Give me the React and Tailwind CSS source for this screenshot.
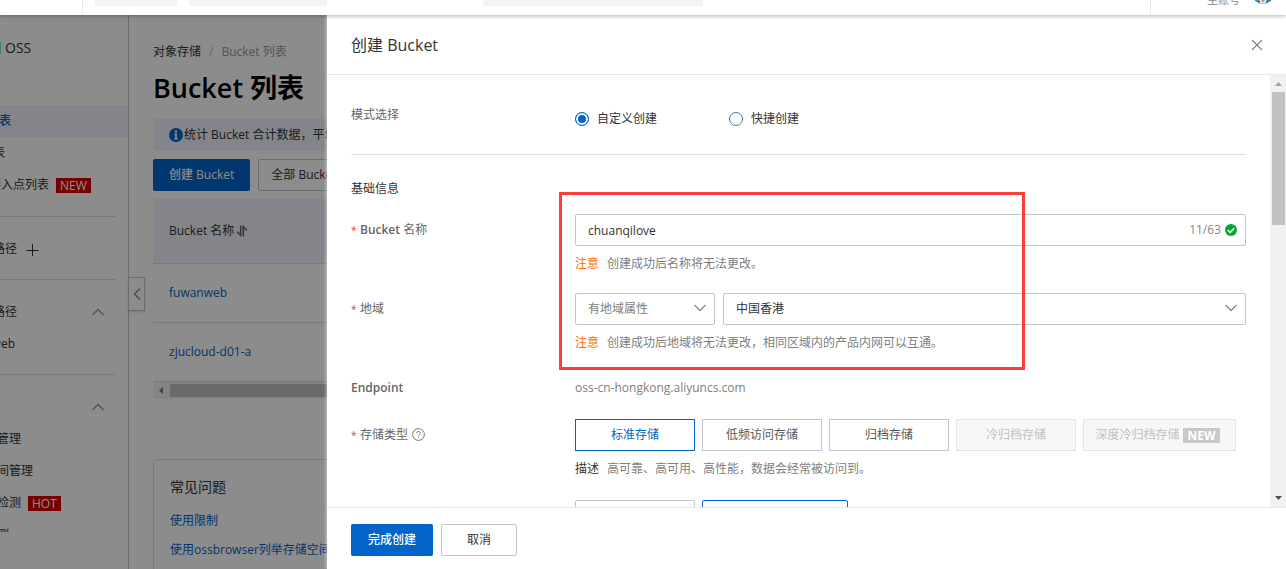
import React from "react";

const STORAGE_TYPES = [
  { label: "标准存储", state: "active" },
  { label: "低频访问存储", state: "normal" },
  { label: "归档存储", state: "normal" },
  { label: "冷归档存储", state: "disabled" },
  { label: "深度冷归档存储", state: "disabled", badge: "NEW" },
];

const OPTION_STYLES = {
  active: "border-[#0064c8] text-[#0064c8]",
  normal: "border-[#c0c6cc] text-[#555]",
  disabled: "border-[#e3e4e6] bg-[#f7f7f7] text-[#c1c1c1]",
};

function Chevron({ className, d = "M1.500 4 7 9.500 12.500 4" }) {
  return (
    <svg viewBox="0 0 14 14" className={className} fill="none" stroke="currentColor" strokeWidth="1.3" aria-hidden="true">
      <path d={d} />
    </svg>
  );
}

const UP = "M1.5 10 7 4.500 12.5 10";

function TopBar() {
  return (
    <header className="relative z-30 flex h-[15px] shrink-0 items-end overflow-hidden bg-white shadow-[0_1px_4px_rgba(0,0,0,0.3)]">
      <div className="flex h-[50px] w-full shrink-0 items-center">
        <div className="h-full w-[83px] border-r border-[#e8e9eb]" />
        <div className="ml-3 h-8 w-[82px] rounded-xs bg-[#f1f4f5]" />
        <div className="ml-3 h-8 w-[138px] rounded-xs bg-[#f1f4f5]" />
        <div className="ml-39 h-8 w-[220px] bg-[#f1f4f5]" />
        <div className="ml-auto flex h-full w-[136px] items-end justify-end gap-3 border-l border-[#e8e9eb] pr-3 text-[11px] text-[#888]">
          <span className="pb-[7px] leading-4">主账号</span>
          <svg viewBox="0 0 22 22" className="mb-[11px] h-[22px] w-[22px]" aria-hidden="true">
            <circle cx="11" cy="11" r="11" fill="#5fa3bd" />
            <path d="M3 18.5Q11 24 19 18.5V15H3Z" fill="#3f83a3" />
            <path d="M7 16h8l-1.500 5.500h-5z" fill="#eef4f5" />
            <path d="M9.500 16h3v4h-3z" fill="#e8876b" />
          </svg>
        </div>
      </div>
    </header>
  );
}

function SideRow({ children, width, badge, active, toggle }) {
  return (
    <li className={`flex h-8 items-center ${active ? "bg-[#eff3fc] font-medium text-[#0064c8]" : ""}`}>
      <span className={`flex shrink-0 justify-end overflow-hidden whitespace-nowrap ${width}`}>{children}</span>
      {badge && <span className="ml-[7px] bg-[#d80000] px-1 leading-[15px] text-white">{badge}</span>}
      {toggle && <Chevron d={UP} className="mr-6 ml-auto h-3.5 w-3.5 text-[#999]" />}
    </li>
  );
}

function Sidebar() {
  return (
    <nav className="relative w-[129px] shrink-0 border-r border-[#c0c6cc] bg-white text-xs">
      <div className="flex h-[517px] flex-col overflow-hidden">
        <div className="flex h-[90px] shrink-0 items-start pt-[22px] text-sm leading-[22px]">
          <span className="mt-[5px] mr-1 h-3 w-px bg-[#7fe0dc]" />
          <span>OSS</span>
        </div>
        <ul className="shrink-0 pb-[15px]">
          <SideRow width="w-[11px]" active>表</SideRow>
          <SideRow width="w-[5px]">表</SideRow>
          <SideRow width="w-[49px]" badge="NEW">接入点列表</SideRow>
        </ul>
        <ul className="mr-3 shrink-0 border-t border-[#dcdde0] pt-4 pb-3.5">
          <li className="flex h-8 items-center gap-2">
            <span className="flex w-[17px] justify-end overflow-hidden whitespace-nowrap">路径</span>
            <svg viewBox="0 0 14 14" className="h-3.5 w-3.5" fill="none" stroke="currentColor" aria-hidden="true">
              <path d="M7.500 2v12M1.500 8.500h12" />
            </svg>
          </li>
        </ul>
        <ul className="-mr-px shrink-0 pb-3.5">
          <li className="mr-[13px] border-t border-[#dcdde0] pb-4" />
          <SideRow width="w-[17px]" toggle>路径</SideRow>
          <SideRow width="w-[15px]">web</SideRow>
        </ul>
        <ul className="-mr-px shrink-0">
          <li className="mr-[13px] border-t border-[#dcdde0] pb-4" />
          <SideRow width="w-0" toggle />
          <SideRow width="w-[21px]">管理</SideRow>
          <SideRow width="w-[33px]">间管理</SideRow>
          <SideRow width="w-[21px]" badge="HOT">检测</SideRow>
          <SideRow width="w-[9px]">测</SideRow>
        </ul>
      </div>
      <button type="button" aria-label="收起" className="absolute top-[262px] left-32 flex h-[34px] w-[17px] items-center justify-center border border-[#c0c6cc] bg-white text-[#888] shadow-sm">
        <Chevron d="M10 1.500 4.500 7l5.500 5.500" className="h-3.5 w-3.5" />
      </button>
    </nav>
  );
}

function BucketPage() {
  return (
    <main className="min-w-0 flex-1 overflow-hidden bg-white pl-6 text-xs">
      <div className="flex gap-2 pt-[27px] leading-5">
        <a href="#oss">对象存储</a>
        <span className="text-[#bbb]">/</span>
        <span className="text-[#999]">Bucket 列表</span>
      </div>
      <h1 className="mt-1.5 text-[27px] leading-10 font-semibold text-black">Bucket 列表</h1>
      <div className="mt-[11px] flex h-8 items-center bg-[#eff3fc] pl-4 whitespace-nowrap">
        <svg viewBox="0 0 14 14" className="mr-px h-3.5 w-3.5 shrink-0" aria-hidden="true">
          <circle cx="7" cy="7" r="7" fill="#0064c8" />
          <path d="M5 5.500h3v4.700h1.200v1.300H4.900v-1.300H6V6.800H5z" fill="#eff3fc" />
          <circle cx="7" cy="3.500" r="1.200" fill="#eff3fc" />
        </svg>
        统计 Bucket 合计数据，平均延迟
      </div>
      <div className="mt-2 flex gap-2 whitespace-nowrap">
        <button type="button" className="h-8 rounded-xs bg-[#0064c8] px-4 font-medium text-white">创建 Bucket</button>
        <button type="button" className="h-8 rounded-xs border border-[#c0c6cc] px-3">全部 Bucket</button>
      </div>
      <table className="mt-2 w-full border-collapse text-left">
        <thead>
          <tr className="h-16 border-b border-[#dcdde0] bg-[#eff3fc]">
            <th className="pl-4 font-normal">
              <span className="flex items-center gap-0.5">
                Bucket 名称
                <svg viewBox="0 0 12 12" className="h-3 w-3" fill="none" stroke="#666" strokeWidth="1.600" aria-hidden="true">
                  <path d="M4.700 0.500v9.800L1.200 6.800M7.300 11.500V1.700L10.800 5.200" />
                </svg>
              </span>
            </th>
          </tr>
        </thead>
        <tbody>
          {["fuwanweb", "zjucloud-d01-a"].map((name) => (
            <tr key={name} className="h-[59px] border-b border-[#dcdde0]">
              <td className="pl-4"><a href={`#${name}`} className="text-[#0064c8]">{name}</a></td>
            </tr>
          ))}
        </tbody>
      </table>
      <div className="flex h-[17px] items-center bg-[#f1f1f1]">
        <svg viewBox="0 0 17 17" className="h-[17px] w-[17px]" aria-hidden="true">
          <path d="M10 5v7L6 8.500z" fill="#777" />
        </svg>
        <div className="h-[13px] flex-1 bg-[#c1c1c1]" />
      </div>
      <section className="mt-[60px] h-40 rounded-tl border border-[#dcdde0] pt-4 pl-4 whitespace-nowrap">
        <h2 className="text-sm leading-[22px]">常见问题</h2>
        <ul className="mt-2 leading-5 text-[#0064c8]">
          <li className="pt-[5px] pb-1"><a href="#limits">使用限制</a></li>
          <li className="pt-[5px] pb-1"><a href="#browser">使用ossbrowser列举存储空间</a></li>
        </ul>
      </section>
    </main>
  );
}

function Row({ id, label, required, extra, children, className = "" }) {
  return (
    <div className={`grid grid-cols-[224px_1fr] text-[#666] ${className}`}>
      <div className="flex items-start pt-1.5 leading-5">
        {required && <span className="w-[9px] shrink-0 text-[10px] text-[#e53935]">*</span>}
        <label htmlFor={id}>{label}</label>
        {extra}
      </div>
      <div className="min-w-0">{children}</div>
    </div>
  );
}

function Hint({ tag, tagColor, children }) {
  return (
    <p className="mt-2 flex gap-2 leading-5 text-[#808080]">
      <span className={tagColor}>{tag}</span>
      <span>{children}</span>
    </p>
  );
}

function Select({ id, label, value, className }) {
  return (
    <div className={`relative ${className}`}>
      <select id={id} aria-label={label} defaultValue={value} className="h-8 w-full appearance-none rounded-xs border border-[#c0c6cc] bg-white px-3 text-inherit outline-none">
        <option>{value}</option>
      </select>
      <Chevron className="pointer-events-none absolute top-2 right-2 h-3.5 w-3.5 text-[#888]" />
    </div>
  );
}

function Radio({ label, checked }) {
  return (
    <label className="flex items-center gap-2 leading-5 text-[#333]">
      <input
        type="radio"
        name="mode"
        defaultChecked={checked}
        className="h-3.5 w-3.5 appearance-none rounded-full border border-[#3a76b0] bg-white checked:border-[#0064c8] checked:bg-[#0064c8] checked:shadow-[inset_0_0_0_2px_#fff]"
      />
      {label}
    </label>
  );
}

function Scrollbar() {
  return (
    <div className="flex w-4 shrink-0 flex-col items-center bg-[#f1f1f1]">
      <svg viewBox="0 0 16 17" className="h-[17px] w-4 shrink-0" aria-hidden="true">
        <path d="M5 11h7L8.500 7z" fill="#a3a3a3" />
      </svg>
      <div className="h-[133px] w-[13px] shrink-0 bg-[#c1c1c1]" />
      <svg viewBox="0 0 16 17" className="mt-auto h-[17px] w-4 shrink-0" aria-hidden="true">
        <path d="M5 6h7L8.500 10z" fill="#505050" />
      </svg>
    </div>
  );
}

function CreateDrawer() {
  return (
    <section className="absolute inset-y-0 right-0 z-20 flex w-[959px] flex-col bg-white text-xs text-[#333] shadow-[-1px_0_3px_rgba(255,255,255,0.5)]">
      <header className="flex h-[60px] shrink-0 items-center justify-between border-b border-[#e8e9eb] px-6">
        <h2 className="text-base leading-6">创建 Bucket</h2>
        <button type="button" aria-label="关闭" className="-mr-1 text-[#888]">
          <svg viewBox="0 0 18 18" className="h-[18px] w-[18px]" fill="none" stroke="currentColor" strokeWidth="1.300" aria-hidden="true">
            <path d="M4 4l10 10M14 4 4 14" />
          </svg>
        </button>
      </header>

      <div className="flex min-h-0 flex-1 overflow-hidden">
        <form className="min-w-0 flex-1 px-6 pt-6">
          <Row label="模式选择" className="border-b border-[#dedede] pb-[25px]">
            <div className="flex gap-18 pt-2.5">
              <Radio label="自定义创建" checked />
              <Radio label="快捷创建" />
            </div>
          </Row>
          <h3 className="mt-6 mb-[15px] leading-5">基础信息</h3>
          <div className="flex flex-col gap-[19px]">
            <Row id="bucket-name" label={<><span className="font-semibold">Bucket</span> 名称</>} required>
              <div className="flex h-8 items-center rounded-xs border border-[#c0c6cc] pr-2">
                <input id="bucket-name" defaultValue="chuanqilove" className="h-full min-w-0 flex-1 px-3 text-[#333] outline-none" />
                <span className="mr-1 text-[#888]">11/63</span>
                <svg viewBox="0 0 12 12" className="h-3 w-3" fill="none" aria-hidden="true">
                  <circle cx="6" cy="6" r="6" fill="#00a82b" />
                  <path d="M2.800 6.100 5.200 8.300 9.200 4.200" stroke="#fff" strokeWidth="1.600" />
                </svg>
              </div>
              <Hint tag="注意" tagColor="text-[#ff6a00]">创建成功后名称将无法更改。</Hint>
            </Row>
            <Row id="region-kind" label="地域" required>
              <div className="flex gap-2">
                <Select id="region-kind" label="有地域属性" value="有地域属性" className="w-[140px] text-[#808080]" />
                <Select id="region" label="中国香港" value="中国香港" className="flex-1 text-[#333]" />
              </div>
              <Hint tag="注意" tagColor="text-[#ff6a00]">创建成功后地域将无法更改，相同区域内的产品内网可以互通。</Hint>
            </Row>
            <Row label={<span className="font-semibold">Endpoint</span>} className="h-7">
              <p className="pt-1.5 leading-5 text-[#808080]">oss-cn-hongkong.aliyuncs.com</p>
            </Row>
            <Row
              label="存储类型"
              required
              className="pb-0.5"
              extra={
                <svg viewBox="0 0 13 13" className="mt-[3px] ml-1 h-[13px] w-[13px]" fill="none" stroke="#777" aria-hidden="true">
                  <circle cx="6.500" cy="6.500" r="5.900" />
                  <path d="M4.700 5.200a1.800 1.800 0 1 1 2.700 1.500c-.6.400-.9.600-.9 1.200M6.500 8.900v1" />
                </svg>
              }
            >
              <div className="flex gap-[7px]">
                {STORAGE_TYPES.map(({ label, state, badge }) => (
                  <button
                    key={label}
                    type="button"
                    disabled={state === "disabled"}
                    className={`flex h-8 items-center justify-center gap-1 border whitespace-nowrap ${badge ? "w-[153px] pr-1" : "w-[120px]"} ${OPTION_STYLES[state]}`}
                  >
                    {label}
                    {badge && <span className="bg-[#c8c8c8] px-1 leading-[15px] font-bold text-white">{badge}</span>}
                  </button>
                ))}
              </div>
              <Hint tag="描述" tagColor="text-[#333]">高可靠、高可用、高性能，数据会经常被访问到。</Hint>
            </Row>
            <div className="grid grid-cols-[224px_1fr]" aria-hidden="true">
              <div />
              <div className="flex gap-[7px]">
                <div className="h-8 w-[120px] rounded-xs border border-[#c0c6cc]" />
                <div className="h-8 w-[146px] rounded-xs border border-[#0064c8]" />
              </div>
            </div>
          </div>
        </form>
        <Scrollbar />
      </div>

      <footer className="flex shrink-0 gap-2 border-t border-[#e8e9eb] px-6 pt-4 pb-[13px]">
        <button type="button" className="h-8 w-[82px] rounded-xs bg-[#0064c8] font-medium text-white">完成创建</button>
        <button type="button" className="h-8 w-[76px] rounded-xs border border-[#c0c6cc]">取消</button>
      </footer>

      <div className="pointer-events-none absolute top-[177px] left-[232px] h-[178px] w-[466px] border-3 border-[#ff3b3b]" />
    </section>
  );
}

export default function App() {
  return (
    <div className="flex h-screen flex-col overflow-hidden bg-white font-['Open_Sans','Noto_Sans_CJK_SC',sans-serif] text-[#333]">
      <TopBar />
      <div className="relative flex min-h-0 flex-1">
        <Sidebar />
        <BucketPage />
        <div className="absolute inset-0 z-10 bg-black/45" />
        <CreateDrawer />
      </div>
    </div>
  );
}
